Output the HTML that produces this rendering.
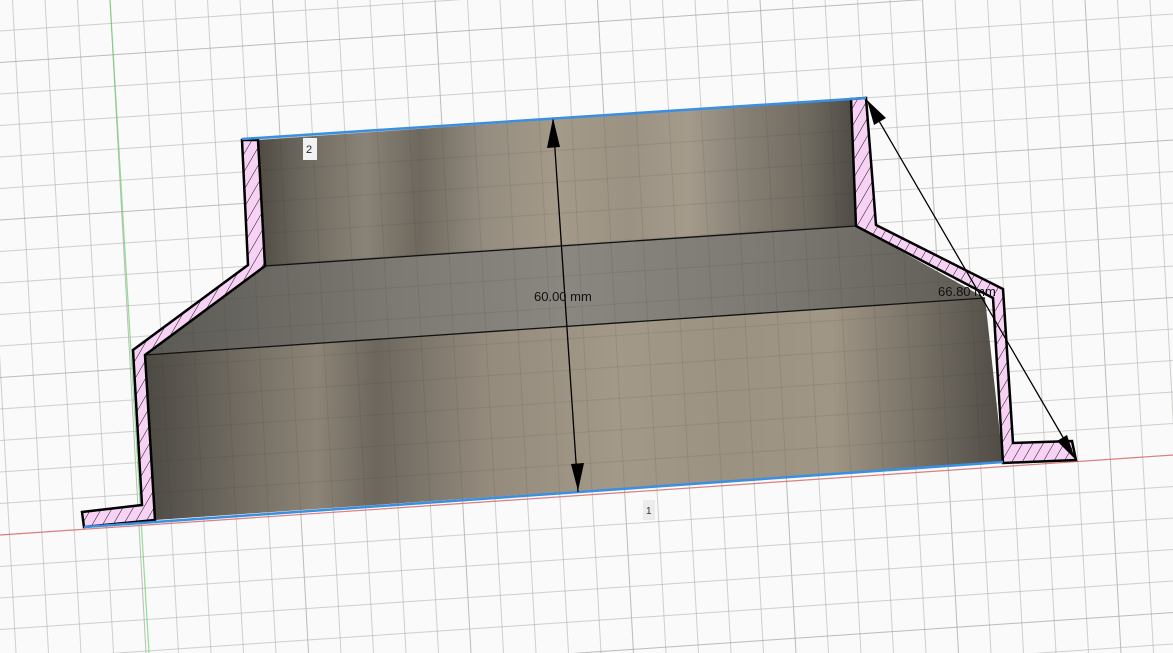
<!DOCTYPE html>
<html><head><meta charset="utf-8"><style>
html,body{margin:0;padding:0;background:#fafafa;overflow:hidden;width:1173px;height:653px}
svg{display:block}
text{font-family:"Liberation Sans",sans-serif}
</style></head><body>
<svg id="s" width="1173" height="653" viewBox="0 0 1173 653" xmlns="http://www.w3.org/2000/svg">
<defs>
<pattern id="hatch" patternUnits="userSpaceOnUse" width="9" height="9" patternTransform="rotate(30)">
<rect width="9" height="9" fill="#f7d2f5"/>
<line x1="0" y1="0" x2="0" y2="9" stroke="#111" stroke-width="1"/>
</pattern>
<linearGradient id="g1" x1="0" x2="1" y1="0" y2="0">
<stop offset="0" stop-color="#4f4b44"/>
<stop offset="0.08" stop-color="#6f6a60"/>
<stop offset="0.18" stop-color="#8a8377"/>
<stop offset="0.27" stop-color="#6e685e"/>
<stop offset="0.38" stop-color="#958d80"/>
<stop offset="0.5" stop-color="#a49a89"/>
<stop offset="0.62" stop-color="#9b9283"/>
<stop offset="0.72" stop-color="#a49b8b"/>
<stop offset="0.82" stop-color="#857e73"/>
<stop offset="0.92" stop-color="#6f6a60"/>
<stop offset="1" stop-color="#4e4a44"/>
</linearGradient>
<linearGradient id="g2" x1="0" x2="1" y1="0" y2="0">
<stop offset="0" stop-color="#5a5852"/>
<stop offset="0.3" stop-color="#7d7a74"/>
<stop offset="0.5" stop-color="#8a8780"/>
<stop offset="0.75" stop-color="#7c7872"/>
<stop offset="1" stop-color="#5e5b55"/>
</linearGradient>
<linearGradient id="g3" x1="0" x2="1" y1="0" y2="0">
<stop offset="0" stop-color="#4c4943"/>
<stop offset="0.1" stop-color="#6e685f"/>
<stop offset="0.2" stop-color="#8c8476"/>
<stop offset="0.27" stop-color="#6c665d"/>
<stop offset="0.4" stop-color="#948b7d"/>
<stop offset="0.55" stop-color="#a39988"/>
<stop offset="0.68" stop-color="#9b9282"/>
<stop offset="0.8" stop-color="#a09685"/>
<stop offset="0.9" stop-color="#777166"/>
<stop offset="1" stop-color="#4f4b45"/>
</linearGradient>
</defs>
<g id="grid" stroke-width="1"></g>
<line x1="110" y1="0" x2="149" y2="653" stroke="#8fe08f" stroke-width="1.2"/>
<line x1="0" y1="535" x2="1173" y2="455" stroke="#f08a8a" stroke-width="1.2"/>

<polygon points="258,140 851,99 856,226 265,266" fill="url(#g1)"/>
<polygon points="265,266 856,226 985,298 145,355" fill="url(#g2)"/>
<polygon points="145,355 985,298 1003,462 155,520" fill="url(#g3)"/>
<g id="igrid" stroke="rgba(60,55,50,0.12)" stroke-width="1"></g>
<polyline points="265,266 856,226" stroke="#111" stroke-width="1.3" fill="none"/>
<polyline points="145,355 985,298" stroke="#111" stroke-width="1.3" fill="none"/>

<polygon points="242,140 258,140 265,266 145,355 155,520 84,527 82,512 142,505 133,350 248,265" fill="url(#hatch)" stroke="#000" stroke-width="2.5"/>
<polygon points="851,99 866,98 876,225 1003,289 1013,443 1072,441 1076,460 1003,463 993,298 856,226" fill="url(#hatch)" stroke="#000" stroke-width="2.5"/>

<line x1="242" y1="139" x2="866" y2="98" stroke="#3a8fe0" stroke-width="2.5"/>
<line x1="84" y1="527" x2="1003" y2="462" stroke="#3a8fe0" stroke-width="2.5"/>

<line x1="553" y1="120" x2="578" y2="492" stroke="#000" stroke-width="1.3"/>
<polygon points="553,118 547,148 560,147" fill="#000"/>
<polygon points="578,491 571,464 584,463" fill="#000"/>
<text x="534" y="301" font-size="13" fill="#111">60.00 mm</text>
<line x1="868" y1="102" x2="1075" y2="458" stroke="#000" stroke-width="1.3"/>
<polygon points="867,100 874,125 886,118" fill="#000"/>
<polygon points="1075,459 1067,435 1057,441" fill="#000"/>
<text x="938" y="296" font-size="13" fill="#111">66.80 mm</text>

<rect x="303" y="138" width="14" height="22" fill="#f2f2f2"/>
<text x="306" y="153" font-size="11" fill="#222">2</text>
<rect x="643" y="500" width="12" height="20" fill="#ececec"/>
<text x="646" y="514" font-size="10" fill="#333">1</text>
</svg>
<script>
var ns="http://www.w3.org/2000/svg";
function L(g,x1,y1,x2,y2,c){var l=document.createElementNS(ns,"line");l.setAttribute("x1",x1);l.setAttribute("y1",y1);l.setAttribute("x2",x2);l.setAttribute("y2",y2);if(c)l.setAttribute("stroke",c);g.appendChild(l);}
var g=document.getElementById("grid"),ig=document.getElementById("igrid");
for(var i=-8;i<40;i++){var xt=110+i*32.5, xb=xt+36;var c=(i%5==0)?"#cfcfcf":"#e4e4e4";L(g,xt,0,xb,653,c);L(ig,xt,0,xb,653);}
for(var k=-6;k<26;k++){var y=535-k*31.5;var c=(k%5==0)?"#cfcfcf":"#e4e4e4";L(g,0,y,1173,y-80,c);L(ig,0,y,1173,y-80);}
</script>
</body></html>
